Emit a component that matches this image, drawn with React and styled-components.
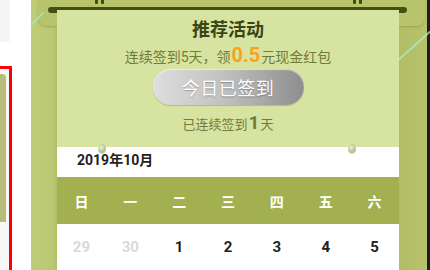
import React from "react";
import styled, { createGlobalStyle } from "styled-components";

const GlobalStyle = createGlobalStyle`
  html, body {
    margin: 0;
    padding: 0;
    background: #ffffff;
  }
  body {
    font-family: Roboto, "Noto Sans CJK SC", sans-serif;
  }
`;

const weekDays = ["日", "一", "二", "三", "四", "五", "六"];
const firstRow = [
  { day: 29, muted: true },
  { day: 30, muted: true },
  { day: 1 },
  { day: 2 },
  { day: 3 },
  { day: 4 },
  { day: 5 }
];

const StyledPage = styled.div`
  display: flex;
  width: 430px;
  height: 270px;
  overflow: hidden;
`;

const StyledLeftRail = styled.div`
  width: 31px;
  flex-shrink: 0;
  background: #ffffff;
  display: flex;
  flex-direction: column;
`;

const StyledGhostBox = styled.div`
  width: 10px;
  height: 42px;
  background: #f5f5f5;
  border-bottom-right-radius: 2px;
`;

const StyledRedBox = styled.div`
  margin-top: 24px;
  width: 9px;
  flex: 1;
  border-top: 3px solid #ff0000;
  border-right: 3px solid #ff0000;
  padding-top: 5px;
  display: flex;
  flex-direction: column;
  background: #f7f7f7;
`;

const StyledRedFill = styled.div`
  width: 6px;
  height: 148px;
  background: #b6bd7b;
  border-top-right-radius: 4px;
`;

const StyledStage = styled.div`
  position: relative;
  flex: 1;
  display: flex;
  flex-direction: column;
  background: linear-gradient(90deg, #bfcc78 0px, #bac873 22px, #b1be66 26px, #b1be66 370px, #b6c36b 396px);
`;

const StyledFrame = styled.div`
  position: absolute;
  left: 7px;
  right: 2px;
  top: -6px;
  height: 32px;
  border-radius: 8px;
  background: #b8c46c;
  box-shadow: 0 1px 2px rgba(80, 90, 30, 0.25);
`;

const StyledRay = styled.div`
  position: absolute;
  width: 2px;
  height: ${props => props.length}px;
  left: ${props => props.x}px;
  top: ${props => props.y}px;
  background: rgba(170, 235, 200, 0.75);
  transform: rotate(${props => props.angle}deg);
  border-radius: 1px;
`;

const StyledHook = styled.div`
  position: absolute;
  top: 0;
  left: ${props => props.x}px;
  display: flex;
  gap: 3px;

  span {
    width: 3px;
    height: 4px;
    background: #3f4d12;
    border-radius: 0 0 1px 1px;
  }
`;

const StyledBar = styled.div`
  position: relative;
  margin: 7px 0 0 17px;
  width: 359px;
  height: 7px;
  border-radius: 4px;
  background: #435014;
  z-index: 1;
`;

const StyledPanel = styled.div`
  position: relative;
  margin: -3px 0 0 26px;
  width: 342px;
  display: flex;
  flex-direction: column;
  z-index: 2;
`;

const StyledSignCard = styled.div`
  background: #d7e3a0;
  display: flex;
  flex-direction: column;
  align-items: center;
  padding: 10px 0 0;
  height: 137px;
  box-sizing: border-box;
`;

const StyledTitle = styled.div`
  font-size: 18px;
  line-height: 20px;
  font-weight: bold;
  color: #3b4514;
`;

const StyledSubtitle = styled.div`
  margin-top: 6px;
  height: 18px;
  font-size: 14px;
  line-height: 18px;
  color: #707c38;
  display: flex;
  align-items: baseline;
`;

const StyledAmount = styled.span`
  font-size: 20px;
  line-height: 18px;
  font-weight: bold;
  color: #f7a21c;
  margin: 0 1px;
`;

const StyledSignedButton = styled.div`
  margin-top: 5px;
  width: 151px;
  height: 36px;
  border-radius: 18px;
  background: linear-gradient(90deg, #dedede 0%, #c2c2c2 45%, #8e8e8e 100%);
  box-shadow: inset 0 1px 1px rgba(255, 255, 255, 0.6), 0 1px 1px rgba(90, 100, 40, 0.3);
  display: flex;
  align-items: center;
  justify-content: center;
  font-size: 18px;
  color: #ffffff;
  letter-spacing: 0.5px;
  text-shadow: 0 1px 1px rgba(0, 0, 0, 0.25);
`;

const StyledStreak = styled.div`
  margin-top: 9px;
  height: 18px;
  font-size: 13px;
  line-height: 18px;
  color: #707c38;
  display: flex;
  align-items: baseline;
`;

const StyledStreakCount = styled.span`
  font-size: 19px;
  line-height: 18px;
  font-weight: bold;
  margin: 0 1px;
`;

const StyledCalendar = styled.div`
  background: #ffffff;
  display: flex;
  flex-direction: column;
`;

const StyledMonth = styled.div`
  height: 30px;
  padding: 4px 0 0 20px;
  box-sizing: border-box;
  font-size: 14px;
  line-height: 18px;
  font-weight: bold;
  color: #222222;
`;

const StyledGridRow = styled.div`
  display: grid;
  grid-template-columns: repeat(7, 1fr);
  align-items: center;
  height: ${props => props.height}px;
  background: ${props => props.background};
`;

const StyledWeekDay = styled.div`
  text-align: center;
  font-size: 14px;
  font-weight: bold;
  color: #ffffff;
`;

const StyledDate = styled.div`
  text-align: center;
  font-size: 15px;
  font-weight: bold;
  color: ${props => (props.muted ? "#d9d9d9" : "#222222")};
`;

const StyledBead = styled.div`
  position: absolute;
  top: 144px;
  left: ${props => props.x}px;
  width: 8px;
  height: 10px;
  border-radius: 50%;
  background: radial-gradient(circle at 40% 35%, #e8f0d0 0%, #aebf86 60%, rgba(170, 190, 130, 0) 100%);
  z-index: 3;
`;

const StyledRightEdge = styled.div`
  width: 3px;
  flex-shrink: 0;
  background: #1e1e1e;
`;

const App = () => {
  return (
    <StyledPage>
      <GlobalStyle />
      <StyledLeftRail>
        <StyledGhostBox />
        <StyledRedBox>
          <StyledRedFill />
        </StyledRedBox>
      </StyledLeftRail>
      <StyledStage>
        <StyledFrame />
        <StyledRay x={5} y={10} length={18} angle={45} />
        <StyledRay x={382} y={24} length={44} angle={48} />
        <StyledHook x={64}>
          <span />
          <span />
        </StyledHook>
        <StyledHook x={322}>
          <span />
          <span />
        </StyledHook>
        <StyledBar />
        <StyledPanel>
          <StyledSignCard>
            <StyledTitle>推荐活动</StyledTitle>
            <StyledSubtitle>
              连续签到5天，领<StyledAmount>0.5</StyledAmount>元现金红包
            </StyledSubtitle>
            <StyledSignedButton>今日已签到</StyledSignedButton>
            <StyledStreak>
              已连续签到<StyledStreakCount>1</StyledStreakCount>天
            </StyledStreak>
          </StyledSignCard>
          <StyledCalendar>
            <StyledMonth>2019年10月</StyledMonth>
            <StyledGridRow height={47} background="#a2b04f">
              {weekDays.map(day => (
                <StyledWeekDay key={day}>{day}</StyledWeekDay>
              ))}
            </StyledGridRow>
            <StyledGridRow height={46} background="#ffffff">
              {firstRow.map(item => (
                <StyledDate key={item.day} muted={item.muted}>
                  {item.day}
                </StyledDate>
              ))}
            </StyledGridRow>
          </StyledCalendar>
        </StyledPanel>
        <StyledBead x={67} />
        <StyledBead x={317} />
      </StyledStage>
      <StyledRightEdge />
    </StyledPage>
  );
};

export default App;
